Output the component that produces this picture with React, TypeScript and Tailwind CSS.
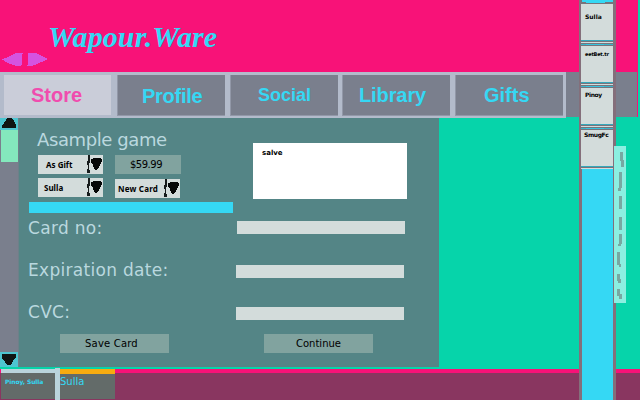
import React from "react";

const sans = "font-['DejaVu_Sans',sans-serif]";

function Dropdown({ label, className }: { label: string; className: string }) {
  return (
    <div className={`flex h-[19px] items-center bg-[#d3dcdb] font-['Noto_Sans','DejaVu_Sans',sans-serif] font-bold whitespace-nowrap text-black ${className}`}>
      <span className="flex-1">{label}</span>
      <svg className="h-[19px] w-[17px] shrink-0" viewBox="0 0 17 19" shapeRendering="crispEdges">
        <path d="M2 0h2v8H3v7h1v3H1v-4h1v-4H1V6h1z" fill="#171c1c" />
        <path d="M5 4l3-1h5l3 1v2l-2 4-1 3-3 2-2-1-1-4-2-3z" fill="#050707" />
      </svg>
    </div>
  );
}

function Tab({ label, className }: { label: string; className: string }) {
  return (
    <div className={`h-[41px] w-[108px] border-b border-l border-[#9298a8] bg-[#7a7f8d] font-bold text-[#35d8f4] ${className}`}>
      {label}
    </div>
  );
}

function Divider() {
  return (
    <svg className="block h-[6px] w-[32px]" viewBox="0 0 32 6" shapeRendering="crispEdges">
      <rect width="32" height="6" fill="#d3dcdb" />
      <rect width="32" height="1" fill="#35a9bc" />
      <rect y="1" width="32" height="1" fill="#77747c" />
      <rect y="3" width="32" height="1" fill="#77747c" />
      <rect y="4" width="32" height="1" fill="#39b4c9" />
      <rect y="5" width="32" height="1" fill="#77747c" />
      <rect x="5" y="4" width="18" height="1" fill="#35c4df" />
    </svg>
  );
}

function Friend({ name, className }: { name: string; className: string }) {
  return (
    <>
      <div className={`h-[36px] bg-[#d3dcdb] font-bold whitespace-nowrap text-black ${className}`}>{name}</div>
      <Divider />
    </>
  );
}

function Field({ label, bar }: { label: string; bar: string }) {
  return (
    <div className="flex h-[42px] items-start whitespace-nowrap text-[#bad8df]">
      <span className="w-[207px] shrink-0 leading-[20px]">{label}</span>
      <div className={`h-[13px] w-[168px] bg-[#d3dcdb] ${bar}`} />
    </div>
  );
}

export default function App() {
  return (
    <div className={`relative flex h-[400px] w-[640px] flex-col overflow-hidden bg-[#06d4aa] ${sans}`}>
      <header className="h-[72px] w-[638px] bg-[#f81278] pt-[20px]">
        <h1 className="h-[33px] pl-[48px] font-['Liberation_Serif',serif] text-[30px] leading-[34px] font-bold tracking-[0.1px] whitespace-nowrap text-[#35d8f4] italic">
          Wapour.Ware
        </h1>
        <svg className="ml-[2px] block h-[13px] w-[46px]" viewBox="0 0 46 13" shapeRendering="crispEdges">
          <path d="M0 6.5L6 4 14 0h7v1h-1v11h-1v1h-5L6 10zM26 0h8l12 6-13 6-4 1h-4v-1h1z" fill="#d553e0" />
        </svg>
      </header>

      <nav className="flex h-[46px] font-['Liberation_Sans',sans-serif] whitespace-nowrap">
        <div className="flex w-[566px] shrink-0 bg-[#b3bbcb] pt-[3px]">
          <div className="ml-[4px] h-[40px] w-[107px] bg-[#cacdd9] pl-[27px] text-[20px] leading-[40px] font-bold text-[#f04cae]">Store</div>
          <Tab label="Profile" className="ml-[6px] pl-[24px] text-[20px] leading-[42px] tracking-[-0.25px]" />
          <Tab label="Social" className="ml-[5px] pl-[27px] text-[18px] leading-[40px]" />
          <Tab label="Library" className="ml-[4px] pl-[16px] text-[20px] leading-[40px] tracking-[-0.1px]" />
          <Tab label="Gifts" className="ml-[5px] pl-[28px] text-[20px] leading-[40px]" />
        </div>
        <div className="h-[45px] w-[72px] border-r border-[#f81278] bg-[#7a7f8d]" />
      </nav>

      <main className="flex h-[249px]">
        <div className="flex w-[19px] flex-col border-r border-[#6d8089] bg-[#7a7f8d]">
          <svg className="h-[12px] w-[18px]" viewBox="0 0 18 12" shapeRendering="crispEdges">
            <rect width="18" height="12" fill="#4ec5d0" />
            <path d="M7 0h5l1 2 1 1 2 4v3H2V7l2-2 2-3z" fill="#101514" />
          </svg>
          <div className="ml-[1px] h-[32px] bg-[#84e8bd]" />
          <svg className="mt-auto h-[15px] w-[18px]" viewBox="0 0 18 15" shapeRendering="crispEdges">
            <rect width="18" height="15" fill="#4ec5d0" />
            <path d="M2 2h14v3l-2 2-2 4-1 2H7l-2-3-3-4z" fill="#101514" />
          </svg>
        </div>

        <section className="w-[420px] bg-[#548586]">
          <div className="flex h-[95px]">
            <div className="w-[214px] pt-[10px] pl-[10px]">
              <h2 className="h-[27px] pl-[8px] text-[18px] leading-[24px] tracking-[-0.4px] whitespace-nowrap text-[#bad8df]">Asample game</h2>
              <div className="flex pl-[9px]">
                <Dropdown label="As Gift" className="w-[65px] pl-[8px] text-[8px]" />
                <div className="ml-[12px] h-[19px] w-[66px] bg-[#81a39f] pl-[15px] text-[10px] leading-[19px] tracking-[-0.5px] text-black">$59.99</div>
              </div>
              <div className="flex pt-[4px] pl-[9px]">
                <Dropdown label="Sulla" className="w-[65px] pl-[6px] text-[8px]" />
                <Dropdown label="New Card" className="mt-[1px] ml-[12px] w-[65px] pl-[3px] text-[8px] tracking-[0.2px]" />
              </div>
              <div className="mt-[4px] h-[11px] w-[204px] bg-[#35d8f4]" />
            </div>
            <div className="mt-[25px] ml-[20px] h-[56px] w-[154px] bg-white pt-[4px] pl-[9px] text-[7px] leading-[13px] font-bold text-black">salve</div>
          </div>

          <div className="h-[121px] pt-[5px] pl-[9px] text-[17px] tracking-[0.3px]">
            <Field label="Card no:" bar="ml-[2px] mt-[3px]" />
            <Field label="Expiration date:" bar="ml-[1px] mt-[5px]" />
            <Field label="CVC:" bar="ml-[1px] mt-[5px]" />
          </div>

          <div className="flex text-[10px] leading-[20px] text-black">
            <div className="ml-[41px] h-[19px] w-[109px] bg-[#81a39f] pl-[25px] tracking-[0.2px]">Save Card</div>
            <div className="ml-[95px] h-[19px] w-[109px] bg-[#81a39f] pl-[32px]">Continue</div>
          </div>
        </section>
      </main>

      <footer className="mt-[2px] flex h-[31px] border-t-4 border-[#f81278] bg-[#893660] whitespace-nowrap text-[#35d8f4]">
        <div className="-mt-[4px] ml-[1px] h-[30px] w-[54px] border-t-4 border-[#bad4dc] bg-[#636b69] pl-[4px] text-[6px] leading-[17px] font-bold tracking-[-0.1px]">Pinoy, Sulla</div>
        <div className="-mt-[5px] h-[32px] w-[5px] bg-[#bad4dc]" />
        <div className="-mt-[4px] h-[30px] w-[55px] border-t-[5px] border-[#f7ab10] bg-[#636b69] text-[10px] leading-[15px]">Sulla</div>
      </footer>

      <aside className="absolute top-0 left-[579px] h-[400px] w-[37px] border-r-[3px] border-l-2 border-[#846f7b] bg-[#35d8f4]">
        <svg className="block h-[4px] w-[32px]" viewBox="0 0 32 4" shapeRendering="crispEdges">
          <path d="M0 0h1v2h4v1h19V2h8v2H0z" fill="#77747c" />
        </svg>
        <Friend name="Sulla" className="pt-[9px] pl-[4px] text-[6px] leading-[8px]" />
        <Friend name="eetBet.tr" className="pt-[4px] pl-[4px] text-[5px] leading-[8px] tracking-[-0.2px]" />
        <Friend name="Pinoy" className="pt-[3px] pl-[4px] text-[6px] leading-[8px] tracking-[-0.4px]" />
        <Friend name="SmugFc" className="pt-[1px] pl-[3px] text-[6px] leading-[8px] tracking-[-0.4px]" />
        <div className="relative -mt-[3px] h-[235px] border-l border-[#846f7b] bg-[#35d8f4]" />
      </aside>

      <svg className="absolute top-[146px] left-[614px] h-[157px] w-[12px]" viewBox="614 146 12 157" shapeRendering="crispEdges">
        <rect x="614" y="146" width="12" height="157" fill="#8cefe1" />
        <path
          d="M620 152h3v8h1v7h-3v-6h-1zM619 172h3v16h-1v3h-3v-3h1zM619 196h3v13h-3zM619 217h3v13h-3zM619 234h3v10h-1v2h-3v-2h1zM617 252h3v12h1v3h-2v-2h-2zM617 274h3v5h1v4h-3v-2h-1zM617 289h3v5h2v5h-3v-3h-2z"
          fill="#77a8a2"
        />
      </svg>
    </div>
  );
}
